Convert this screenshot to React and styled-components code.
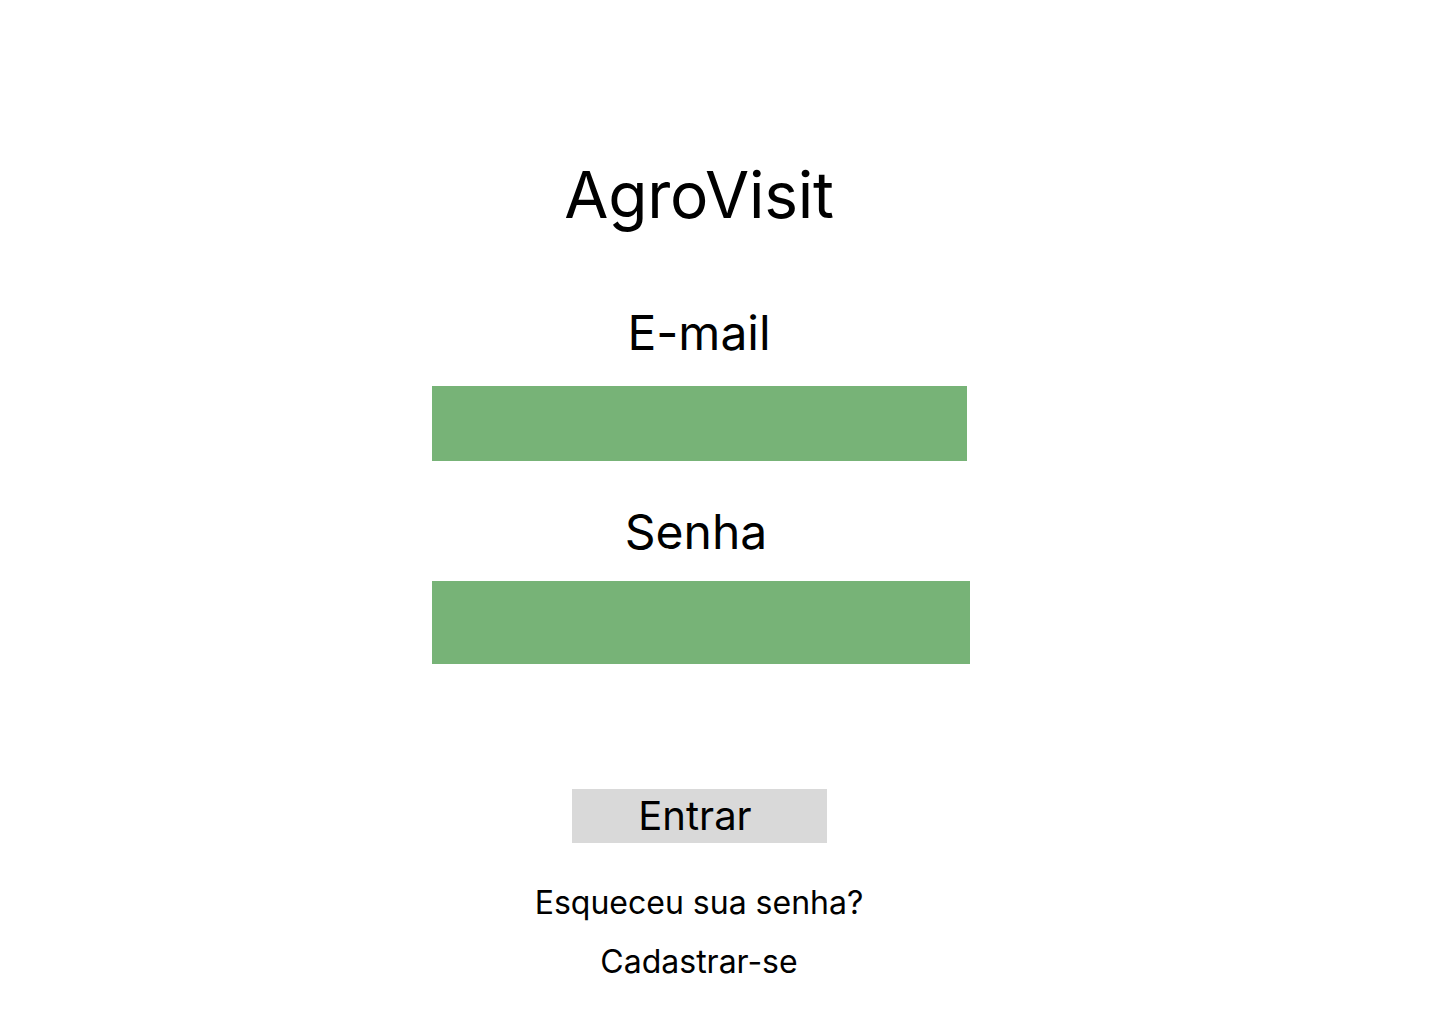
import React from 'react';
import styled, { createGlobalStyle } from 'styled-components';

const GlobalStyle = createGlobalStyle`
  html, body {
    margin: 0;
    padding: 0;
    background: #fff;
  }
  body {
    font-family: Inter, "Noto Sans", Arial, sans-serif;
    color: #000;
  }
`;

const Page = styled.main`
  min-height: 1024px;
  padding-top: 156px;
  padding-left: 432px;
  box-sizing: border-box;
`;

const LoginForm = styled.form`
  width: 538px;
  display: flex;
  flex-direction: column;
  align-items: center;
`;

const Title = styled.h1`
  margin: 0;
  font-size: 64px;
  font-weight: 400;
  line-height: 78px;
  letter-spacing: -0.2px;
  margin-left: -4px;
`;

const Label = styled.label`
  font-size: 48px;
  font-weight: 400;
  line-height: 58px;
  margin-top: ${(p) => p.$top}px;
  margin-left: ${(p) => p.$shift || 0}px;
`;

const Field = styled.input`
  display: block;
  align-self: flex-start;
  width: ${(p) => p.$width}px;
  height: ${(p) => p.$height}px;
  margin-top: ${(p) => p.$top}px;
  border: none;
  outline: none;
  padding: 0 16px;
  box-sizing: border-box;
  background: #77b377;
  font-family: inherit;
  font-size: 24px;
`;

const SubmitButton = styled.button`
  width: 255px;
  height: 54px;
  margin-top: 125px;
  margin-left: -4px;
  border: none;
  background: #d9d9d9;
  color: #000;
  font-family: inherit;
  font-size: 40px;
  line-height: 54px;
  padding: 0 8px 0 0;
  cursor: pointer;
`;

const LinkText = styled.a`
  font-size: 32px;
  line-height: 39px;
  color: #000;
  text-decoration: none;
  margin-top: ${(p) => p.$top}px;
  margin-left: -4px;
  cursor: pointer;
`;

export default function App() {
  return (
    <>
      <GlobalStyle />
      <Page>
        <LoginForm onSubmit={(e) => e.preventDefault()}>
          <Title>AgroVisit</Title>
          <Label htmlFor="email" $top={70} $shift={-4}>E-mail</Label>
          <Field id="email" type="email" $width={535} $height={75} $top={24} />
          <Label htmlFor="senha" $top={42} $shift={-10}>Senha</Label>
          <Field id="senha" type="password" $width={538} $height={83} $top={20} />
          <SubmitButton type="submit">Entrar</SubmitButton>
          <LinkText $top={40}>Esqueceu sua senha?</LinkText>
          <LinkText $top={20}>Cadastrar-se</LinkText>
        </LoginForm>
      </Page>
    </>
  );
}
